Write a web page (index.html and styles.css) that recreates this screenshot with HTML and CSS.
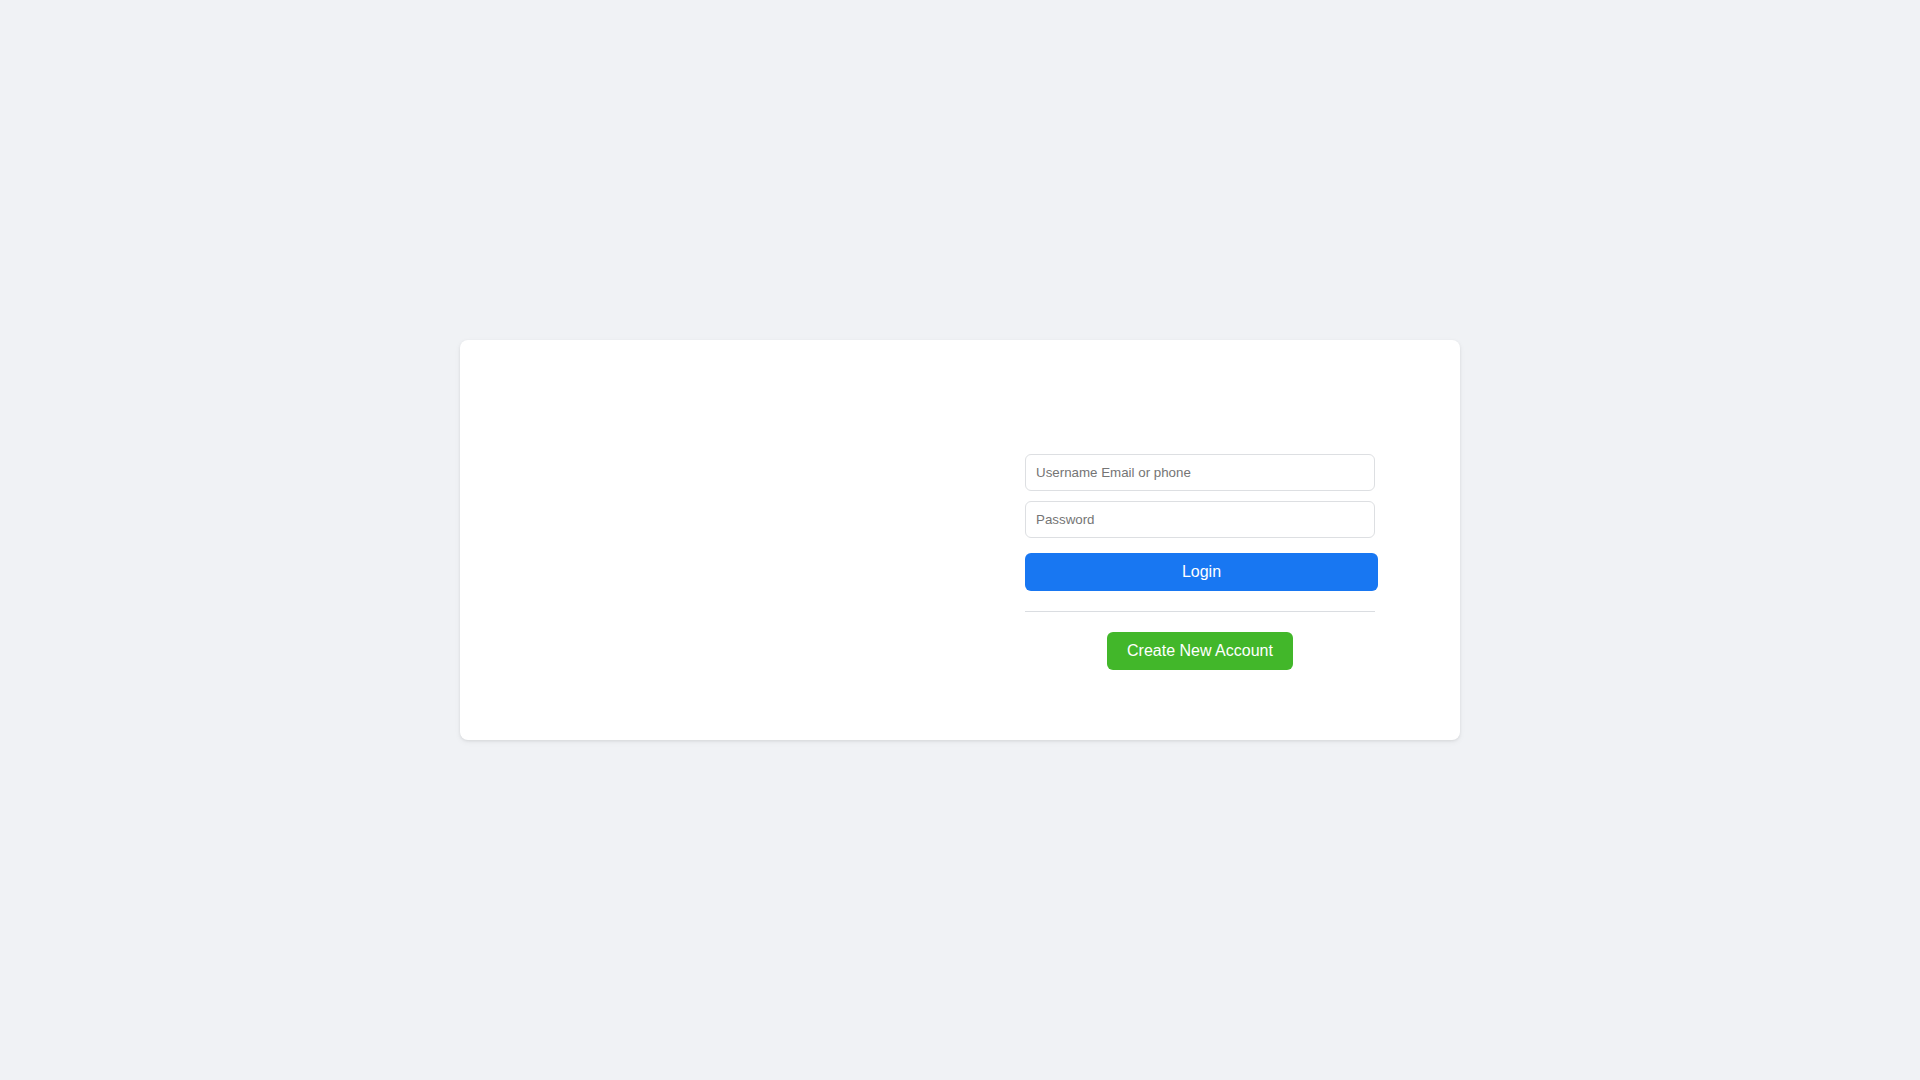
FILE: index.html
```html
<!DOCTYPE html>
<html lang="en">
<head>
<meta charset="utf-8">
<title>Login</title>
<link rel="stylesheet" href="styles.css">
</head>
<body>
<main class="page">
  <section class="card">
    <div class="intro"></div>
    <form class="login-form">
      <input class="field" type="text" placeholder="Username Email or phone">
      <input class="field" type="password" placeholder="Password">
      <button class="btn-login" type="button">Login</button>
      <hr class="divider">
      <div class="create-row">
        <button class="btn-create" type="button">Create New Account</button>
      </div>
    </form>
  </section>
</main>
</body>
</html>
```
FILE: styles.css
```css
html, body {
  margin: 0;
  padding: 0;
}
body {
  background: #f0f2f5;
  font-family: "Liberation Sans", Arial, sans-serif;
}
.page {
  min-height: 100vh;
  display: flex;
  align-items: center;
  justify-content: center;
}
.card {
  box-sizing: border-box;
  width: 1000px;
  height: 400px;
  background: #ffffff;
  border-radius: 8px;
  box-shadow: 0 1px 3px rgba(0, 0, 0, 0.08), 0 2px 6px rgba(0, 0, 0, 0.05);
  display: flex;
  justify-content: space-between;
  padding: 114px 82px 0 565px;
}
.intro {
  display: none;
}
.login-form {
  width: 353px;
  display: flex;
  flex-direction: column;
  margin-left: auto;
}
.field {
  box-sizing: border-box;
  width: 350px;
  height: 37px;
  margin: 0 0 10px 0;
  padding: 0 10px;
  border: 1px solid #dddfe2;
  border-radius: 6px;
  font-family: "Liberation Sans", Arial, sans-serif;
  font-size: 13.333px;
  color: #1c1e21;
  outline: none;
}
.field::placeholder {
  color: #757575;
}
.btn-login {
  box-sizing: border-box;
  width: 353px;
  height: 38px;
  margin-top: 5px;
  border: none;
  border-radius: 6px;
  background: #1877f2;
  color: #ffffff;
  font-family: "Liberation Sans", Arial, sans-serif;
  font-size: 16px;
  padding: 0;
}
.divider {
  width: 350px;
  margin: 20px 0 0 0;
  border: none;
  border-top: 1px solid #dadde1;
  height: 0;
}
.create-row {
  width: 350px;
  display: flex;
  justify-content: center;
  margin-top: 20px;
}
.btn-create {
  box-sizing: border-box;
  height: 38px;
  padding: 0 20px;
  border: none;
  border-radius: 6px;
  background: #42b72a;
  color: #ffffff;
  font-family: "Liberation Sans", Arial, sans-serif;
  font-size: 16px;
}
```
